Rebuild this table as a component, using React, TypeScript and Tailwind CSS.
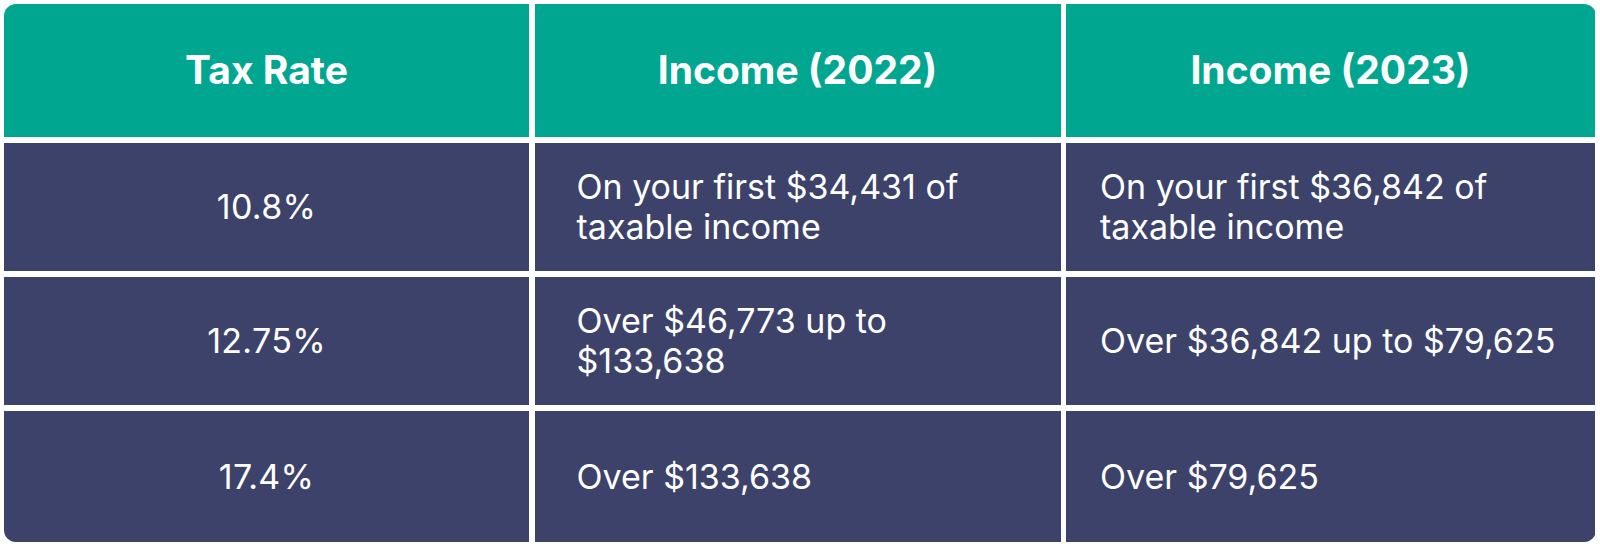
import React from 'react';

const rows = [
  {
    rate: '10.8%',
    y2022: 'On your first $34,431 of taxable income',
    y2023: 'On your first $36,842 of taxable income',
  },
  {
    rate: '12.75%',
    y2022: 'Over $46,773 up to $133,638',
    y2023: 'Over $36,842 up to $79,625',
  },
  {
    rate: '17.4%',
    y2022: 'Over $133,638',
    y2023: 'Over $79,625',
  },
];

export default function App() {
  return (
    <div className="w-[1600px] h-[546px] bg-white p-[4px] font-['Inter','Liberation_Sans',sans-serif]">
      <div className="grid grid-cols-[525px_526px_529px] grid-rows-[133px_128px_128px_131px] gap-x-[5.5px] gap-y-[6px] rounded-[12px] overflow-hidden text-white">
        {/* header */}
        <div className="bg-[#00a68f] flex items-center justify-center text-[39px] font-bold">Tax Rate</div>
        <div className="bg-[#00a68f] flex items-center justify-center text-[39px] font-bold">Income (2022)</div>
        <div className="bg-[#00a68f] flex items-center justify-center text-[39px] font-bold">Income (2023)</div>

        {rows.map((r) => (
          <React.Fragment key={r.rate}>
            <div className="bg-[#3d426b] flex items-center justify-center text-[34px] leading-[40px] tracking-[0.3px]">{r.rate}</div>
            <div className="bg-[#3d426b] flex items-center pl-[42px] pr-[42px] text-[34px] leading-[40px]">{r.y2022}</div>
            <div className="bg-[#3d426b] flex items-center pl-[34px] pr-[20px] text-[34px] leading-[40px]">{r.y2023}</div>
          </React.Fragment>
        ))}
      </div>
    </div>
  );
}
